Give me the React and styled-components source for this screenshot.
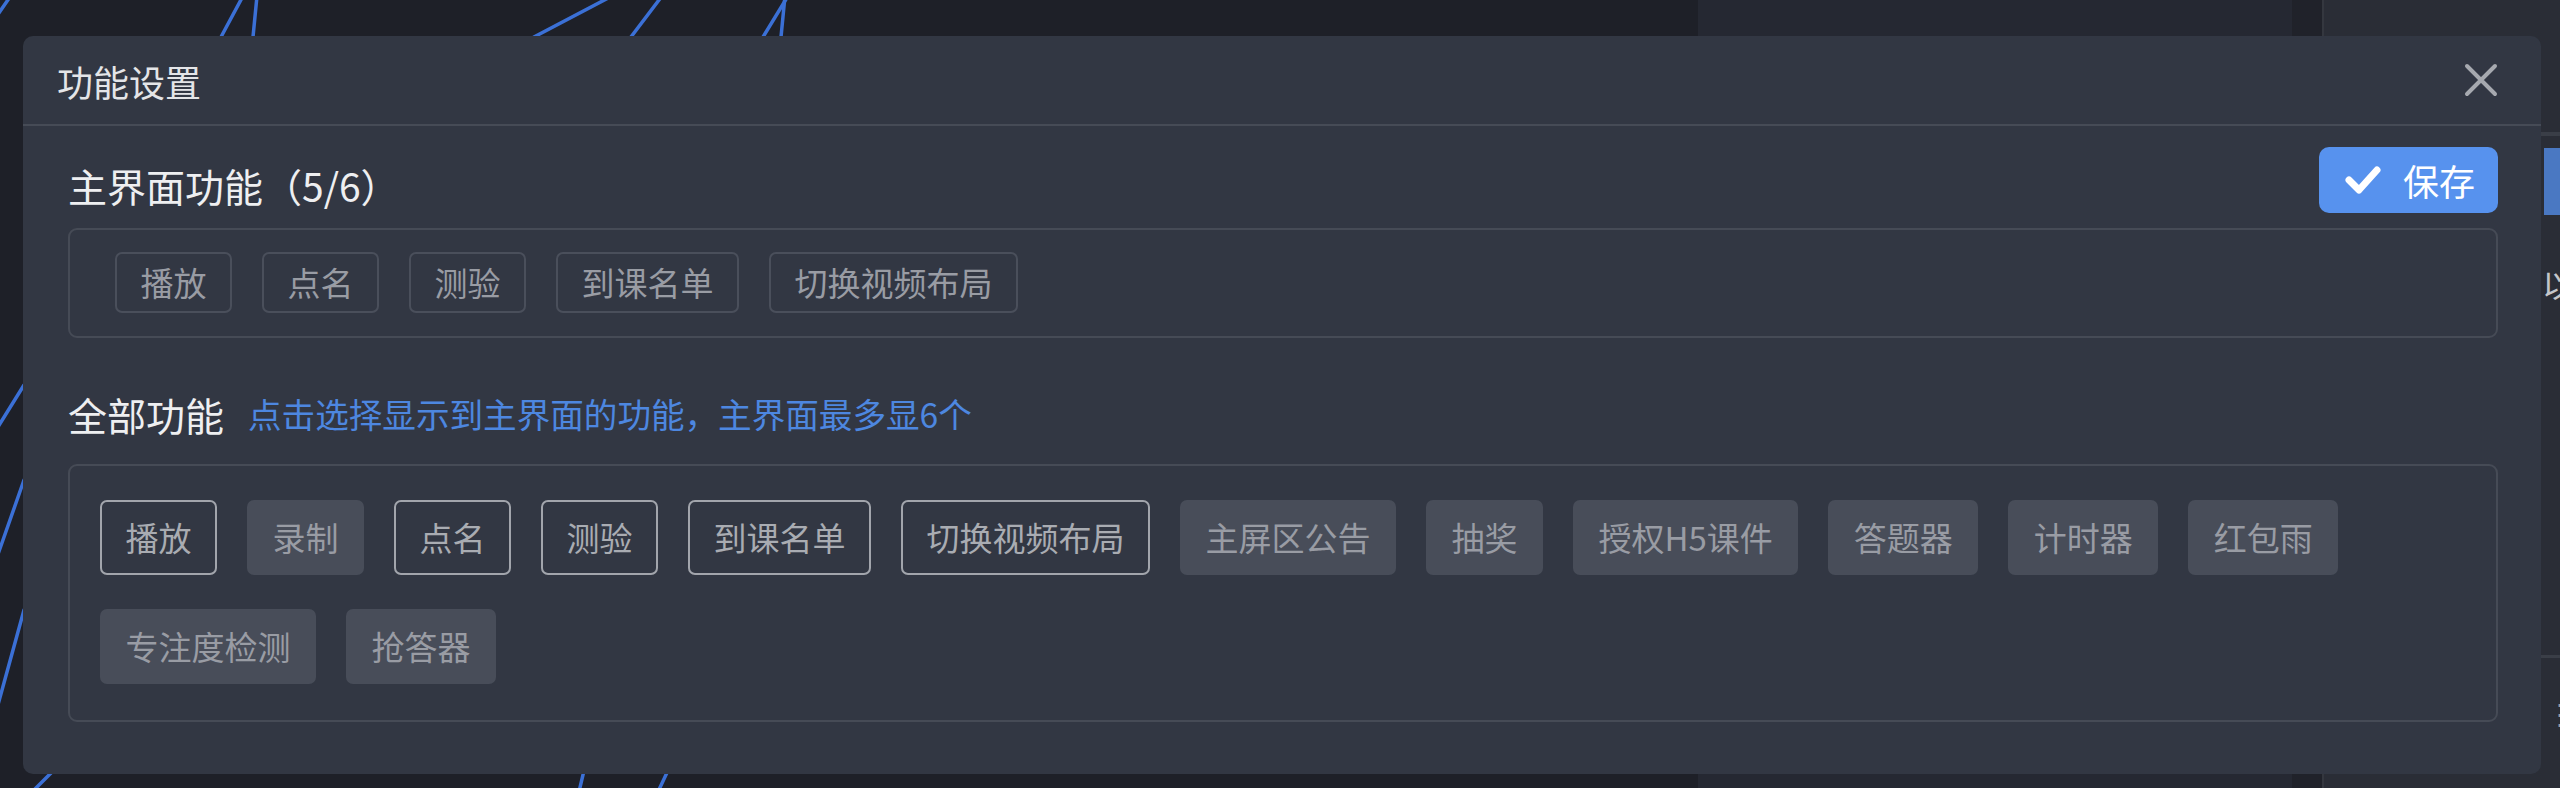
import React from "react";
import styled, { createGlobalStyle } from "styled-components";

const GlobalStyle = createGlobalStyle`
  html, body {
    margin: 0;
    padding: 0;
    background: #1e2028;
  }
  body {
    font-family: "Noto Sans CJK SC", "Noto Sans", "Liberation Sans", sans-serif;
  }
  #root {
    width: 2560px;
    height: 788px;
    overflow: hidden;
    position: relative;
  }
`;

const Backdrop = styled.div`
  display: flex;
  width: 2560px;
  height: 788px;
`;

const Canvas = styled.div`
  width: 1698px;
  flex: none;
  background: #1e2028;

  svg {
    display: block;
  }
`;

const MidPanel = styled.div`
  width: 594px;
  flex: none;
  background: #252832;
`;

const Gutter = styled.div`
  width: 30px;
  flex: none;
  background: #20222a;
`;

const SidePanel = styled.div`
  flex: 1;
  display: flex;
  flex-direction: column;
  background: #2a2d36;
  border-left: 2px solid #34373f;
`;

const SideHeader = styled.div`
  height: 132px;
  border-bottom: 4px solid #3a3e47;
`;

const SideButton = styled.div`
  margin: 12px 0 0 220px;
  height: 67px;
  background: #4a78c2;
`;

const SideText = styled.div`
  margin: 50px 0 0 218px;
  font-size: 32px;
  line-height: 36px;
  color: #c4c6ca;
`;

const SideRule = styled.div`
  margin-top: 354px;
  border-top: 3px solid #3a3e47;
`;

const SideDots = styled.div`
  margin: 36px 0 0 222px;
  font-size: 28px;
  line-height: 36px;
  color: #9a9da4;
`;

const Modal = styled.div`
  position: absolute;
  top: 36px;
  left: 23px;
  width: 2518px;
  background: #323743;
  border-radius: 10px;
`;

const Header = styled.div`
  height: 88px;
  display: flex;
  align-items: center;
  justify-content: space-between;
  padding: 0 43px 0 34px;
  border-bottom: 2px solid #464b56;
`;

const Title = styled.div`
  font-size: 36px;
  line-height: 40px;
  color: #e4e5e8;
  padding-top: 2px;
`;

const CloseButton = styled.button`
  width: 34px;
  height: 34px;
  padding: 0;
  border: none;
  background: none;
  cursor: pointer;

  svg {
    display: block;
  }
`;

const Body = styled.div`
  padding: 21px 43px 52px 45px;
`;

const SectionRow = styled.div`
  display: flex;
  align-items: center;
  justify-content: space-between;
  height: ${(p) => p.$height}px;
  margin-top: ${(p) => p.$top || 0}px;
`;

const SectionTitle = styled.div`
  display: flex;
  align-items: center;
  font-size: 39px;
  line-height: 46px;
  color: #eeeff1;
  margin-top: ${(p) => p.$shift || 0}px;
`;

const Hint = styled.span`
  margin-left: 24px;
  font-size: 33.6px;
  color: #4d87e0;
`;

const SaveButton = styled.button`
  display: flex;
  align-items: center;
  gap: 22px;
  width: 179px;
  height: 66px;
  padding: 0 23px 0 26px;
  border: none;
  border-radius: 10px;
  background: #5792ee;
  color: #ffffff;
  font-family: inherit;
  font-size: 36px;
  cursor: pointer;

  svg {
    display: block;
    flex: none;
  }
`;

const TagBox = styled.div`
  display: flex;
  flex-wrap: wrap;
  align-content: flex-start;
  align-items: center;
  column-gap: ${(p) => p.$gap}px;
  row-gap: 34px;
  margin-top: ${(p) => p.$top}px;
  padding: ${(p) => p.$pad};
  border: 2px solid #464b56;
  border-radius: 9px;
`;

const Tag = styled.div`
  box-sizing: border-box;
  display: flex;
  align-items: center;
  height: ${(p) => (p.$large ? 75 : 61)}px;
  padding: 0 23.5px;
  border: 2px solid
    ${(p) => (p.$variant === "muted" ? "#4a4f5b" : p.$variant === "on" ? "#a2a5ac" : "transparent")};
  border-radius: 7px;
  background: ${(p) => (p.$variant === "off" ? "#484d59" : "transparent")};
  color: ${(p) => (p.$variant === "on" ? "#a9acb2" : "#999ca4")};
  font-size: 33px;
  line-height: 1;
  white-space: nowrap;
`;

const mainFeatures = ["播放", "点名", "测验", "到课名单", "切换视频布局"];

const allFeatures = [
  { name: "播放", on: true },
  { name: "录制", on: false },
  { name: "点名", on: true },
  { name: "测验", on: true },
  { name: "到课名单", on: true },
  { name: "切换视频布局", on: true },
  { name: "主屏区公告", on: false },
  { name: "抽奖", on: false },
  { name: "授权H5课件", on: false },
  { name: "答题器", on: false },
  { name: "计时器", on: false },
  { name: "红包雨", on: false },
  { name: "专注度检测", on: false },
  { name: "抢答器", on: false },
];

const strokes = [
  "M-6 20 L12 -6",
  "M200 80 L221 37 L243 -4",
  "M250 90 L253 37 L257 -4",
  "M470 80 L534 37 L612 -4",
  "M610 80 L631 37 L662 -4",
  "M745 90 L763 37 L788 -4",
  "M779 90 L781 37 L785 -4",
  "M-4 430 L24 385",
  "M-4 560 L24 480",
  "M-4 712 L24 610",
  "M28 796 L62 762",
  "M578 796 L586 762",
  "M656 796 L672 762",
];

const Scribble = () => (
  <svg width="1698" height="788" viewBox="0 0 1698 788">
    {strokes.map((d) => (
      <path key={d} d={d} fill="none" stroke="#3b70d6" strokeWidth="3.5" strokeLinecap="round" />
    ))}
  </svg>
);

const CloseIcon = () => (
  <svg width="34" height="34" viewBox="0 0 34 34">
    <path d="M3 3 L31 31 M31 3 L3 31" stroke="#a6a9af" strokeWidth="4" strokeLinecap="round" />
  </svg>
);

const CheckIcon = () => (
  <svg width="36" height="30" viewBox="0 0 36 30">
    <path
      d="M4 15 L14 25 L32 5"
      fill="none"
      stroke="#ffffff"
      strokeWidth="7"
      strokeLinecap="round"
      strokeLinejoin="round"
    />
  </svg>
);

const App = () => {
  return (
    <>
      <GlobalStyle />
      <Backdrop>
        <Canvas>
          <Scribble />
        </Canvas>
        <MidPanel />
        <Gutter />
        <SidePanel>
          <SideHeader />
          <SideButton />
          <SideText>以</SideText>
          <SideRule />
          <SideDots>⋮</SideDots>
        </SidePanel>
      </Backdrop>

      <Modal>
        <Header>
          <Title>功能设置</Title>
          <CloseButton aria-label="关闭">
            <CloseIcon />
          </CloseButton>
        </Header>

        <Body>
          <SectionRow $height={66}>
            <SectionTitle $shift={10}>主界面功能（5/6）</SectionTitle>
            <SaveButton>
              <CheckIcon />
              保存
            </SaveButton>
          </SectionRow>

          <TagBox $top={15} $gap={30} $pad="22px 45px 23px">
            {mainFeatures.map((name) => (
              <Tag key={name} $variant="muted">
                {name}
              </Tag>
            ))}
          </TagBox>

          <SectionRow $height={56} $top={48}>
            <SectionTitle>
              全部功能
              <Hint>点击选择显示到主界面的功能，主界面最多显6个</Hint>
            </SectionTitle>
          </SectionRow>

          <TagBox $top={22} $gap={30} $pad="34px 30px 36px">
            {allFeatures.map((item) => (
              <Tag key={item.name} $large $variant={item.on ? "on" : "off"}>
                {item.name}
              </Tag>
            ))}
          </TagBox>
        </Body>
      </Modal>
    </>
  );
};

export default App;
